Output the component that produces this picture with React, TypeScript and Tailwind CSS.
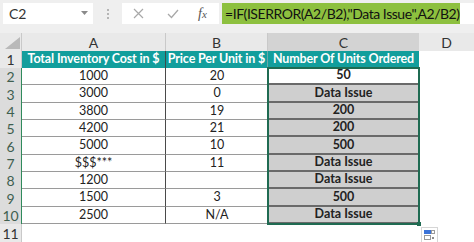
import React from "react";

const rows: { n: number; a: string; b: string; c: string; h: number }[] = [
  { n: 2, a: "1000", b: "20", c: "50", h: 17 },
  { n: 3, a: "3000", b: "0", c: "Data Issue", h: 18 },
  { n: 4, a: "3800", b: "19", c: "200", h: 17 },
  { n: 5, a: "4200", b: "21", c: "200", h: 17 },
  { n: 6, a: "5000", b: "10", c: "500", h: 18 },
  { n: 7, a: "$$$***", b: "11", c: "Data Issue", h: 17 },
  { n: 8, a: "1200", b: "", c: "Data Issue", h: 17 },
  { n: 9, a: "1500", b: "3", c: "500", h: 18 },
  { n: 10, a: "2500", b: "N/A", c: "Data Issue", h: 17 },
];

export default function App() {
  return (
    <div
      className="relative w-[474px] h-[242px] overflow-hidden bg-white text-[#222]"
      style={{ fontFamily: "Lato, 'Open Sans', sans-serif" }}
    >
      {/* formula bar */}
      <div className="flex h-[33px] items-start bg-[#efefef] pt-[3px]">
        <div className="ml-[3px] flex h-[21px] w-[90px] items-center justify-between bg-white pl-[6px] pr-[5px] text-[14px] text-[#333]">
          <span>C2</span>
          <svg width="7" height="5" viewBox="0 0 7 5">
            <path d="M0 0 L7 0 L3.5 4 Z" fill="#8a8a8a" />
          </svg>
        </div>
        <div className="flex h-[21px] w-[29px] flex-col items-center justify-center gap-[2px]">
          <div className="h-[2px] w-[2px] bg-[#b5b5b5]" />
          <div className="h-[2px] w-[2px] bg-[#b5b5b5]" />
          <div className="h-[2px] w-[2px] bg-[#b5b5b5]" />
        </div>
        <div className="flex h-[21px] w-[97px] items-center bg-white">
          <svg className="ml-[11px]" width="11" height="11" viewBox="0 0 11 11">
            <path d="M1 1 L10 10 M10 1 L1 10" stroke="#a8a8a8" strokeWidth="1.2" />
          </svg>
          <svg className="ml-[23px]" width="12" height="10" viewBox="0 0 12 10">
            <path d="M1 5 L4.5 8.5 L11 1" stroke="#a8a8a8" strokeWidth="1.3" fill="none" />
          </svg>
          <span
            className="ml-[19px] text-[14px] italic text-[#555]"
            style={{ fontFamily: "'Liberation Serif', serif" }}
          >
            f<span className="text-[11px]">x</span>
          </span>
        </div>
        <div className="ml-[3px] flex h-[21px] flex-1 items-center bg-white">
          <div className="flex h-full w-[238px] items-center whitespace-nowrap bg-[#8dc03f] pl-[3px] text-[14px] tracking-[-0.45px] text-[#111]">
            =IF(ISERROR(A2/B2),"Data Issue",A2/B2)
          </div>
        </div>
      </div>

      {/* column headers */}
      <div className="flex h-[18px] bg-[#e9e9e9] text-[14px] text-[#333]">
        <div className="relative w-[22px] border-r border-[#c9c9c9]">
          <svg className="absolute right-[1px] bottom-[2px]" width="15" height="12" viewBox="0 0 15 12">
            <path d="M15 0 L15 12 L0 12 Z" fill="#b9b9b9" />
          </svg>
        </div>
        <div className="flex w-[144px] items-center justify-center border-r border-[#c9c9c9]">A</div>
        <div className="flex w-[102px] items-center justify-center border-r border-[#c9c9c9]">B</div>
        <div className="flex w-[151px] items-center justify-center bg-[#d3d3d3] text-[#333]">C</div>
        <div className="flex w-[55px] items-center justify-center">D</div>
      </div>

      {/* row 1 */}
      <div className="flex h-[17px] text-[12.5px] font-bold tracking-[-0.15px] text-white">
        <div className="flex w-[22px] items-center justify-center border-r border-[#c9c9c9] bg-[#e9e9e9] text-[14px] font-normal tracking-normal text-[#333]">
          1
        </div>
        <div className="flex w-[144px] items-center justify-center whitespace-nowrap border-r border-[#3d4b4b] bg-[#129e9c]">
          Total Inventory Cost in $
        </div>
        <div className="flex w-[102px] items-center justify-center whitespace-nowrap border-r border-[#6aa8a8] bg-[#129e9c]">
          Price Per Unit in $
        </div>
        <div className="flex w-[151px] items-center justify-center whitespace-nowrap bg-[#129e9c]">
          Number Of Units Ordered
        </div>
        <div className="w-[55px]" />
      </div>

      {rows.map((r) => (
        <div key={r.n} className="flex text-[12.5px]" style={{ height: r.h }}>
          <div className="flex w-[22px] items-center justify-center border-r border-[#2f8a5c] bg-[#dcdcdc] text-[14px] text-[#3f5f50]">
            {r.n}
          </div>
          <div className="flex w-[144px] items-center justify-center border-r border-b border-r-[#4a4a4a] border-b-[#9a9a9a] bg-white">
            {r.a}
          </div>
          <div className="flex w-[102px] items-center justify-center border-b border-[#9a9a9a] bg-white">
            {r.b}
          </div>
          <div
            className={
              "flex w-[151px] items-center justify-center border-b-2 border-[#6a6a6a] font-bold " +
              (r.n === 2 ? "bg-white" : "bg-[#cfcfcf]")
            }
          >
            {r.c}
          </div>
          <div className="w-[55px]" />
        </div>
      ))}

      {/* row 11 */}
      <div className="flex h-[18px]">
        <div className="flex w-[22px] items-center justify-center border-r border-[#c9c9c9] bg-[#e9e9e9] text-[14px] text-[#333]">
          11
        </div>
      </div>

      {/* selection border */}
      <div className="pointer-events-none absolute left-[267px] top-[67px] h-[158px] w-[153px] border-2 border-[#1f6b52]" />
      <div className="absolute left-[417px] top-[222px] h-[4px] w-[4px] bg-[#1f6b52]" />

      {/* quick analysis icon */}
      <div className="absolute left-[421px] top-[227px] flex h-[16px] w-[17px] items-center justify-center border border-[#d6d6d6] bg-white">
        <svg width="13" height="12" viewBox="0 0 13 12">
          <rect x="1" y="1" width="7" height="4" fill="#3b73d8" />
          <rect x="8.5" y="1.5" width="3" height="3" fill="none" stroke="#9a9a9a" strokeWidth="1" />
          <rect x="1.5" y="6.5" width="6" height="4" fill="none" stroke="#9a9a9a" strokeWidth="1" />
          <circle cx="10" cy="9" r="1" fill="#666" />
        </svg>
      </div>
    </div>
  );
}
